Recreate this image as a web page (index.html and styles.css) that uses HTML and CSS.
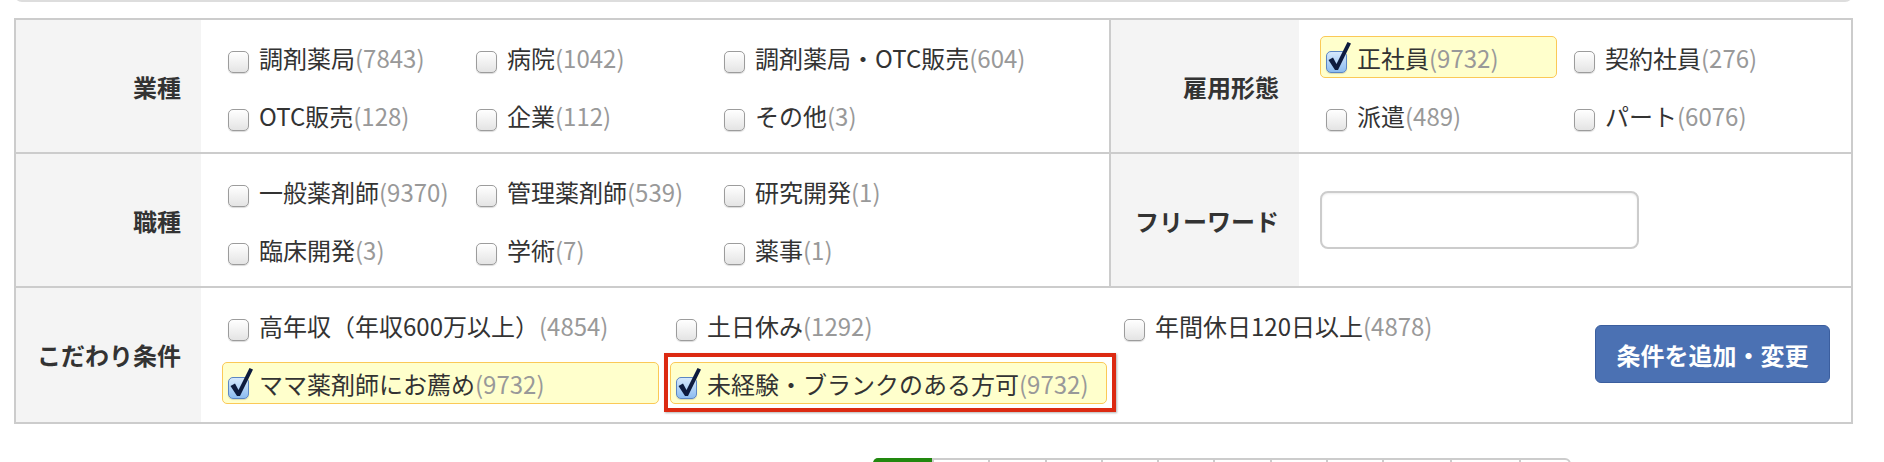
FILE: index.html
```html
<!DOCTYPE html>
<html lang="ja">
<head>
    <meta charset="UTF-8">
    <meta name="viewport" content="width=device-width, initial-scale=1.0">
    <title>求人検索</title>
    <link rel="stylesheet" href="styles.css">
</head>
<body>
    <div class="wrap">
        <div class="prev-box"></div>
        <form class="search">
            <table class="search-table">
                <colgroup>
                    <col class="col-head">
                    <col class="col-body">
                    <col class="col-head2">
                    <col>
                </colgroup>
                <tr>
                    <th>業種</th>
                    <td>
                        <div class="opts">
                            <label class="opt"><span class="cb"></span>調剤薬局<span class="num">(7843)</span></label>
                            <label class="opt"><span class="cb"></span>病院<span class="num">(1042)</span></label>
                            <label class="opt"><span class="cb"></span>調剤薬局・OTC販売<span class="num">(604)</span></label>
                            <label class="opt"><span class="cb"></span>OTC販売<span class="num">(128)</span></label>
                            <label class="opt"><span class="cb"></span>企業<span class="num">(112)</span></label>
                            <label class="opt"><span class="cb"></span>その他<span class="num">(3)</span></label>
                        </div>
                    </td>
                    <th>雇用形態</th>
                    <td>
                        <div class="opts">
                            <label class="opt checked"><span class="cb on"><svg viewBox="0 0 26 30"><path d="M2.5 19 L7 16.5 L10.5 23 L21.5 1 L25 2.5 L12 29 L9 29 Z"/></svg></span>正社員<span class="num">(9732)</span></label>
                            <label class="opt"><span class="cb"></span>契約社員<span class="num">(276)</span></label>
                            <label class="opt"><span class="cb"></span>派遣<span class="num">(489)</span></label>
                            <label class="opt"><span class="cb"></span>パート<span class="num">(6076)</span></label>
                        </div>
                    </td>
                </tr>
                <tr>
                    <th>職種</th>
                    <td>
                        <div class="opts">
                            <label class="opt"><span class="cb"></span>一般薬剤師<span class="num">(9370)</span></label>
                            <label class="opt"><span class="cb"></span>管理薬剤師<span class="num">(539)</span></label>
                            <label class="opt"><span class="cb"></span>研究開発<span class="num">(1)</span></label>
                            <label class="opt"><span class="cb"></span>臨床開発<span class="num">(3)</span></label>
                            <label class="opt"><span class="cb"></span>学術<span class="num">(7)</span></label>
                            <label class="opt"><span class="cb"></span>薬事<span class="num">(1)</span></label>
                        </div>
                    </td>
                    <th>フリーワード</th>
                    <td>
                        <input type="text" class="freeword" name="word">
                    </td>
                </tr>
                <tr class="last-row">
                    <th>こだわり条件</th>
                    <td colspan="3">
                        <div class="cond">
                            <div class="opts opts-wide">
                                <label class="opt"><span class="cb"></span>高年収（年収600万以上）<span class="num">(4854)</span></label>
                                <label class="opt"><span class="cb"></span>土日休み<span class="num">(1292)</span></label>
                                <label class="opt"><span class="cb"></span>年間休日120日以上<span class="num">(4878)</span></label>
                                <label class="opt checked"><span class="cb on"><svg viewBox="0 0 26 30"><path d="M2.5 19 L7 16.5 L10.5 23 L21.5 1 L25 2.5 L12 29 L9 29 Z"/></svg></span>ママ薬剤師にお薦め<span class="num">(9732)</span></label>
                                <label class="opt checked marked"><span class="cb on"><svg viewBox="0 0 26 30"><path d="M2.5 19 L7 16.5 L10.5 23 L21.5 1 L25 2.5 L12 29 L9 29 Z"/></svg></span>未経験・ブランクのある方可<span class="num">(9732)</span></label>
                            </div>
                            <button type="submit" class="btn">条件を追加・変更</button>
                        </div>
                    </td>
                </tr>
            </table>
        </form>
        <ul class="pager">
            <li class="current">1</li>
            <li>2</li>
            <li>3</li>
            <li>4</li>
            <li>5</li>
            <li>6</li>
            <li>7</li>
            <li>8</li>
            <li>9</li>
            <li>10</li>
            <li>20</li>
            <li>›</li>
        </ul>
    </div>
</body>
</html>
```

FILE: styles.css
```css
body {
    margin: 0;
    font-family: "Noto Sans CJK JP", "Noto Sans", sans-serif;
    color: #333;
    background: #fff;
}
.wrap {
    width: 1839px;
    margin-left: 14px;
}
.prev-box {
    height: 10px;
    margin-top: -10px;
    border: 2px solid #ddd;
    border-top: 0;
    border-radius: 0 0 8px 8px;
}
.search-table {
    width: 100%;
    table-layout: fixed;
    border-collapse: collapse;
    border: 2px solid #ccc;
    margin-top: 16px;
}
.col-head {
    width: 186px;
}
.col-body {
    width: 909px;
}
.col-head2 {
    width: 189px;
}
.search-table th,
.search-table td {
    border-top: 2px solid #ccc;
    border-bottom: 2px solid #ccc;
    padding: 16px 21px;
}
.last-row th,
.last-row td {
    padding-bottom: 18px;
}
.search-table th {
    background: #f4f4f4;
    text-align: right;
    font-size: 24px;
    font-weight: bold;
    padding-right: 20px;
    border-left: 2px solid #ccc;
    white-space: nowrap;
}
.opts {
    display: flex;
    flex-wrap: wrap;
    row-gap: 16px;
}
.opt {
    display: flex;
    align-items: center;
    box-sizing: border-box;
    width: 237px;
    height: 42px;
    margin-right: 11px;
    padding: 0 5px;
    border: 1px solid transparent;
    border-radius: 5px;
    font-size: 24px;
    white-space: nowrap;
}
.opts-wide {
    width: 1344px;
}
.opts-wide .opt {
    width: 437px;
}
.opt.checked {
    background: #ffffcc;
    border-color: #fbc957;
}
.opt.marked {
    position: relative;
}
.opt.marked::after {
    content: "";
    position: absolute;
    top: -10px;
    right: -10px;
    bottom: -9px;
    left: -7px;
    border: 4px solid #dc2a12;
    box-shadow: 1px 1px 2px rgba(0, 0, 0, 0.3);
}
.num {
    color: #999;
}
.cb {
    position: relative;
    flex: none;
    box-sizing: border-box;
    width: 21px;
    height: 22px;
    margin: 10px 10px 0 0;
    border: 1px solid #9c9c9c;
    border-radius: 5px;
    background: linear-gradient(#ffffff, #e4e4e4);
    box-shadow: 0 1px 1px rgba(0, 0, 0, 0.15);
}
.cb.on {
    border-color: #5b86c4;
    background: linear-gradient(#d6e9fc, #8cbcf0);
}
.cb svg {
    position: absolute;
    left: -1px;
    top: -11px;
    width: 26px;
    height: 30px;
    fill: #0d1b3e;
}
.freeword {
    display: block;
    box-sizing: border-box;
    width: 319px;
    height: 58px;
    border: 2px solid #ccc;
    border-radius: 8px;
    box-shadow: inset 0 1px 2px rgba(0, 0, 0, 0.08);
    font-size: 22px;
    padding: 0 10px;
}
.cond {
    display: flex;
    align-items: center;
    justify-content: space-between;
}
.btn {
    width: 235px;
    height: 58px;
    background: #4b71b3;
    border: 1px solid #3b5e9e;
    border-radius: 6px;
    color: #fff;
    font-family: "Noto Sans CJK JP", sans-serif;
    font-size: 24px;
    font-weight: bold;
}
.pager {
    display: flex;
    list-style: none;
    margin: 34px 0 0 859px;
    padding: 0;
    width: max-content;
    border: 2px solid #ccc;
    border-radius: 6px;
}
.pager li {
    padding: 14px 21px;
    font-size: 22px;
    border-left: 2px solid #ccc;
}
.pager li:first-child {
    border-left: 0;
}
.pager .current {
    background: #22880f;
    color: #fff;
    border-radius: 5px 0 0 5px;
    margin: -2px 0 0 -2px;
    padding-left: 26px;
}
```
